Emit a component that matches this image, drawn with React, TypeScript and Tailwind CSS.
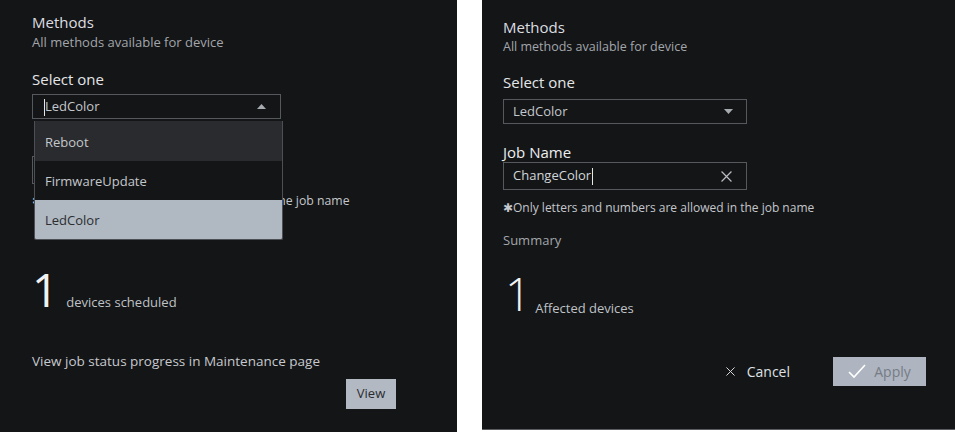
import React from "react";

const font = { fontFamily: '"Open Sans", "Noto Sans", sans-serif' };

function TriUp() {
  return (
    <svg width="9" height="5" viewBox="0 0 9 5" className="fill-[#a7abb0]">
      <path d="M0 5 L4.5 0 L9 5 Z" />
    </svg>
  );
}

function TriDown() {
  return (
    <svg width="9" height="5" viewBox="0 0 9 5" className="fill-[#a7abb0]">
      <path d="M0 0 L9 0 L4.5 5 Z" />
    </svg>
  );
}

function XIcon({ size = 10, color = "#c9ccd0" }: { size?: number; color?: string }) {
  return (
    <svg width={size} height={size} viewBox="0 0 10 10" fill="none" stroke={color} strokeWidth="1.1">
      <path d="M0.5 0.5 L9.5 9.5 M9.5 0.5 L0.5 9.5" />
    </svg>
  );
}

function Check() {
  return (
    <svg width="18" height="15" viewBox="0 0 18 15" fill="none" stroke="#ffffff" strokeWidth="1.6">
      <path d="M1 8 L6 13 L17 1" />
    </svg>
  );
}

/* 왼쪽: 드롭다운 열린 상태 */
function LeftPanel() {
  return (
    <div className="relative w-[457px] shrink-0 bg-[#141517] px-[32px] pt-[12px]">
      <div className="text-[15px] leading-[20px] text-[#dcdde0]">Methods</div>
      <div className="mt-[1px] text-[13px] leading-[18px] text-[#a2a6ab]">All methods available for device</div>

      <div className="mt-[18px] text-[15px] leading-[20px] text-[#e4e5e7]">Select one</div>
      <div className="relative mt-[5px] flex h-[25px] w-[249px] items-center justify-between border border-[#55585d] pl-[12px] pr-[14px]">
        <span className="relative text-[13px] text-[#c4c7cb]">
          <span className="absolute -left-[1px] top-[2px] h-[17px] w-px bg-[#e6e6e6]" />
          LedColor
        </span>
        <TriUp />
      </div>

      {/* 목록 아래로 가려진 입력칸 */}
      <div className="mt-[37px] h-[28px] w-[249px] border border-[#55585d]" />
      <div className="mt-[8px] text-[12.25px] leading-[18px] text-[#c4c7cb]">✱Only letters and numbers are allowed in the job name</div>

      <div className="mt-[59px] flex items-end gap-[8px]">
        <span className="text-[46px] font-normal leading-[40px] text-[#f2f2f2]">1</span>
        <span className="mb-[-2px] text-[13px] leading-[18px] text-[#bfc2c6]">devices scheduled</span>
      </div>

      <div className="mt-[42px] text-[13.5px] leading-[20px] text-[#c6c9cd]">View job status progress in Maintenance page</div>
      <div className="mt-[8px] flex w-[364px] justify-end">
        <button className="h-[30px] w-[50px] bg-[#b2b9c3] text-[13px] text-[#2a2c30]">View</button>
      </div>

      {/* 열린 목록 */}
      <div className="absolute left-[34px] top-[121px] w-[249px] overflow-hidden rounded-b-[2px] border border-t-0 border-[#4c4f54] text-[13px]">
        <div className="flex h-[40px] items-center bg-[#2a2b2e] pl-[10px] pt-[3px] text-[#c4c7cb]">Reboot</div>
        <div className="flex h-[39px] items-center bg-[#141517] pl-[10px] pt-[3px] text-[#c4c7cb]">FirmwareUpdate</div>
        <div className="flex h-[39px] items-center bg-[#b0b8c2] pl-[10px] pt-[3px] text-[#2b2d31]">LedColor</div>
      </div>
    </div>
  );
}

/* 오른쪽: 작업 이름 입력 상태 */
function RightPanel() {
  return (
    <div className="h-[430px] flex-1 border-b border-[#5a5c60] bg-[#141517] pl-[21px] pr-[29px] pt-[18px]">
      <div className="text-[15px] leading-[18px] text-[#dcdde0]">Methods</div>
      <div className="mt-[2px] text-[12.5px] leading-[18px] text-[#a2a6ab]">All methods available for device</div>

      <div className="mt-[16px] text-[15px] leading-[20px] text-[#e4e5e7]">Select one</div>
      <div className="mt-[7px] flex h-[25px] w-[244px] items-center justify-between border border-[#55585d] pl-[9px] pr-[13px]">
        <span className="text-[13px] text-[#c4c7cb]">LedColor</span>
        <TriDown />
      </div>

      <div className="mt-[18px] text-[15px] leading-[20px] text-[#eceef0]">Job Name</div>
      <div className="flex h-[28px] w-[244px] items-center justify-between border border-[#55585d] pl-[9px] pr-[14px]">
        <span className="flex items-center text-[13px] text-[#d2d5d8]">
          ChangeColor
          <span className="ml-px h-[17px] w-px bg-[#e6e6e6]" />
        </span>
        <XIcon size={11} color="#b9bcc0" />
      </div>
      <div className="mt-[9px] text-[12px] leading-[18px] text-[#c4c7cb]">✱Only letters and numbers are allowed in the job name</div>
      <div className="mt-[14px] text-[13px] leading-[18px] text-[#a2a6ab]">Summary</div>

      <div className="mt-[24px] flex items-end gap-[4px] pl-[2px]">
        <span className="text-[46px] font-extralight leading-[40px] text-[#f2f2f2]">1</span>
        <span className="mb-[-4px] text-[13px] leading-[18px] text-[#bfc2c6]">Affected devices</span>
      </div>

      <div className="mt-[44px] flex items-center justify-end">
        <button className="flex items-center gap-[12px] text-[14px] text-[#dfe1e4]">
          <XIcon size={9} color="#d8dadd" />
          Cancel
        </button>
        <button className="ml-[43px] flex h-[29px] w-[93px] items-center justify-center gap-[8px] bg-[#aeb5c0] text-[14px] text-[#767c85]">
          <Check />
          Apply
        </button>
      </div>
    </div>
  );
}

export default function App() {
  return (
    <div className="flex h-[432px] w-[955px] bg-white" style={font}>
      <LeftPanel />
      <div className="w-[25px] shrink-0" />
      <RightPanel />
    </div>
  );
}
